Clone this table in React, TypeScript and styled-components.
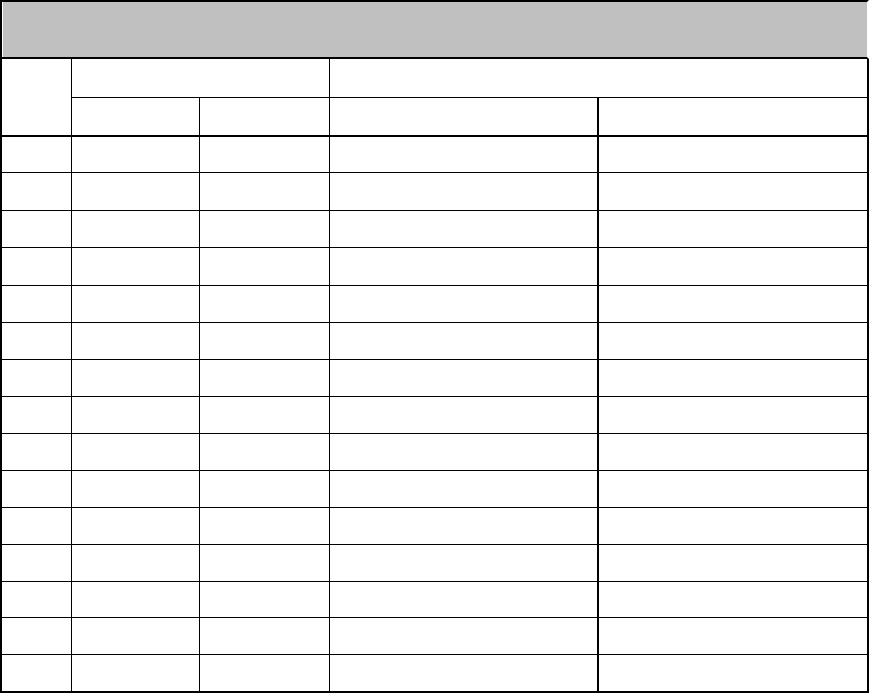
import React from 'react';
import styled, { createGlobalStyle } from 'styled-components';

const GlobalStyle = createGlobalStyle`
  html, body {
    margin: 0;
    padding: 0;
    background: #fff;
    font-family: "Liberation Sans", Arial, sans-serif;
  }
`;

const Table = styled.table`
  width: 869px;
  table-layout: fixed;
  border-collapse: separate;
  border-spacing: 0;
  font-size: 13px;
`;

const Col = styled.col<{ $w: number }>`
  width: ${({ $w }) => $w}px;
`;

const Cell = styled.td<{ $h?: number; $left?: number; $bottom?: number; $right?: number }>`
  box-sizing: border-box;
  padding: 0;
  ${({ $h }) => ($h ? `height: ${$h}px;` : '')}
  border-left: ${({ $left = 1 }) => $left}px solid #000;
  border-bottom: ${({ $bottom = 1 }) => $bottom}px solid #000;
  border-right: ${({ $right = 0 }) => $right}px solid #000;
`;

const Title = styled.td`
  box-sizing: border-box;
  padding: 0;
  height: 59px;
  background: #c0c0c0;
  border-top: 2px solid #000;
  border-left: 2px solid #000;
  border-right: 2px solid #fff;
  border-bottom: 2px solid #000;
  box-shadow: inset 1px 0 0 #fff;
`;

// widths include the cell's own left border
const widths = [71, 128, 130, 268, 272];
const rowHeights = [36, 38, 37, 38, 37, 37, 37, 37, 37, 37, 37, 37, 36, 37, 38];

export default function App() {
  return (
    <>
      <GlobalStyle />
      <Table>
        <colgroup>
          {widths.map((w, i) => (
            <Col key={i} $w={w} />
          ))}
        </colgroup>
        <tbody>
          <tr>
            <Title colSpan={5} />
          </tr>
          <tr>
            <Cell rowSpan={2} $left={2} $bottom={2} $h={78} />
            <Cell colSpan={2} $h={39} />
            <Cell colSpan={2} $right={2} $h={39} />
          </tr>
          <tr>
            <Cell $bottom={2} $h={39} />
            <Cell $bottom={2} $h={39} />
            <Cell $bottom={2} $h={39} />
            <Cell $left={2} $right={2} $bottom={2} $h={39} />
          </tr>
          {rowHeights.map((h, i) => {
            const b = i === rowHeights.length - 1 ? 2 : 1;
            return (
              <tr key={i}>
                <Cell $left={2} $bottom={b} $h={h} />
                <Cell $bottom={b} $h={h} />
                <Cell $bottom={b} $h={h} />
                <Cell $bottom={b} $h={h} />
                <Cell $left={2} $right={2} $bottom={b} $h={h} />
              </tr>
            );
          })}
        </tbody>
      </Table>
    </>
  );
}
